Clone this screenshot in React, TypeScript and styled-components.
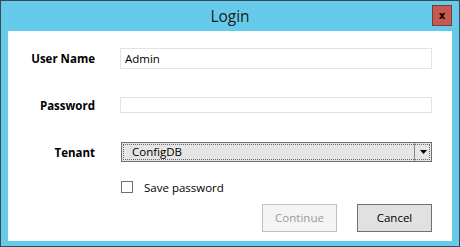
import React from 'react'
import styled, { createGlobalStyle } from 'styled-components'

const GlobalStyle = createGlobalStyle`
    html, body {
        margin: 0;
        padding: 0;
        background: #ffffff;
    }
    * {
        box-sizing: border-box;
    }
`

const Window = styled.div`
    width: 460px;
    height: 247px;
    display: flex;
    flex-direction: column;
    background-color: #66cbea;
    border: 1px solid #3b4a52;
    padding: 0 7px 5px 7px;
    font-family: 'Open Sans', 'Noto Sans', sans-serif;
    font-size: 11.5px;
    color: #000000;
`

const TitleBar = styled.div`
    position: relative;
    height: 30px;
    flex: none;
    display: flex;
    align-items: center;
    justify-content: center;

    h1 {
        margin: 0 0 1px 0;
        font-family: 'Open Sans', 'Noto Sans', sans-serif;
        font-size: 15.5px;
        font-weight: 400;
        color: #1a1a1a;
    }
`

const CloseButton = styled.button`
    position: absolute;
    right: 0;
    top: 4px;
    width: 20px;
    height: 21px;
    padding: 0;
    border: 1px solid #7a3a36;
    background-color: #c75a50;
    color: #000000;
    font-family: 'DejaVu Sans', sans-serif;
    font-size: 10px;
    font-weight: 700;
    line-height: 17px;
    text-align: center;
`

const Body = styled.div`
    flex: 1;
    background-color: #ffffff;
    padding: 17px 20px 0 0;
    display: flex;
    flex-direction: column;
`

const Row = styled.div<{ $mt: number; $h: number }>`
    display: flex;
    align-items: center;
    margin-top: ${p => p.$mt}px;
    height: ${p => p.$h}px;
`

const Label = styled.label`
    width: 87px;
    flex: none;
    margin-right: 25px;
    text-align: right;
    font-weight: 700;
    font-size: 11.5px;
`

const TextBox = styled.input`
    flex: 1;
    height: 100%;
    border: 1px solid #e3e3e3;
    background: #ffffff;
    padding: 0 4px;
    font-family: 'Open Sans', 'Noto Sans', sans-serif;
    font-size: 11.5px;
    color: #000000;
    outline: none;
`

const Combo = styled.div`
    flex: 1;
    height: 100%;
    margin-left: 1px;
    display: flex;
    border: 1px solid #707070;
    background-color: #e5e5e5;
    outline: 1px dotted #6a6a6a;
    outline-offset: -3px;

    span {
        flex: 1;
        padding-left: 10px;
        line-height: 17px;
    }
    i {
        width: 17px;
        flex: none;
        border-left: 1px solid #8a8a8a;
        display: flex;
        align-items: center;
        justify-content: center;
    }
`

const Check = styled.div`
    display: flex;
    align-items: center;
    margin-left: 113px;

    i {
        width: 12px;
        height: 12px;
        border: 1px solid #707070;
        background: #ffffff;
        margin-right: 11px;
    }
`

const Buttons = styled.div`
    display: flex;
    justify-content: flex-end;
    gap: 20px;
    margin-top: 11px;
`

const Button = styled.button<{ $disabled?: boolean }>`
    width: 75px;
    height: 28px;
    padding: 0 0 1px 0;
    font-family: 'Open Sans', 'Noto Sans', sans-serif;
    font-size: 11.5px;
    border: 1px solid ${p => (p.$disabled ? '#bfbfbf' : '#707070')};
    background-color: ${p => (p.$disabled ? '#f4f4f4' : '#e1e1e1')};
    color: ${p => (p.$disabled ? '#9a9a9a' : '#000000')};
`

const App = () => {
    return (
        <>
            <GlobalStyle />
            <Window>
                <TitleBar>
                    <h1>Login</h1>
                    <CloseButton>x</CloseButton>
                </TitleBar>
                <Body>
                    <Row $mt={0} $h={21}>
                        <Label>User Name</Label>
                        <TextBox defaultValue='Admin' />
                    </Row>
                    <Row $mt={28} $h={16}>
                        <Label>Password</Label>
                        <TextBox type='password' />
                    </Row>
                    <Row $mt={29} $h={20}>
                        <Label>Tenant</Label>
                        <Combo>
                            <span>ConfigDB</span>
                            <i>
                                <svg width='7' height='4' viewBox='0 0 7 4'>
                                    <path d='M0 0h7L3.5 4z' fill='#000' />
                                </svg>
                            </i>
                        </Combo>
                    </Row>
                    <Row $mt={19} $h={12}>
                        <Check>
                            <i />
                            <span>Save password</span>
                        </Check>
                    </Row>
                    <Buttons>
                        <Button $disabled>Continue</Button>
                        <Button>Cancel</Button>
                    </Buttons>
                </Body>
            </Window>
        </>
    )
}

export default App
